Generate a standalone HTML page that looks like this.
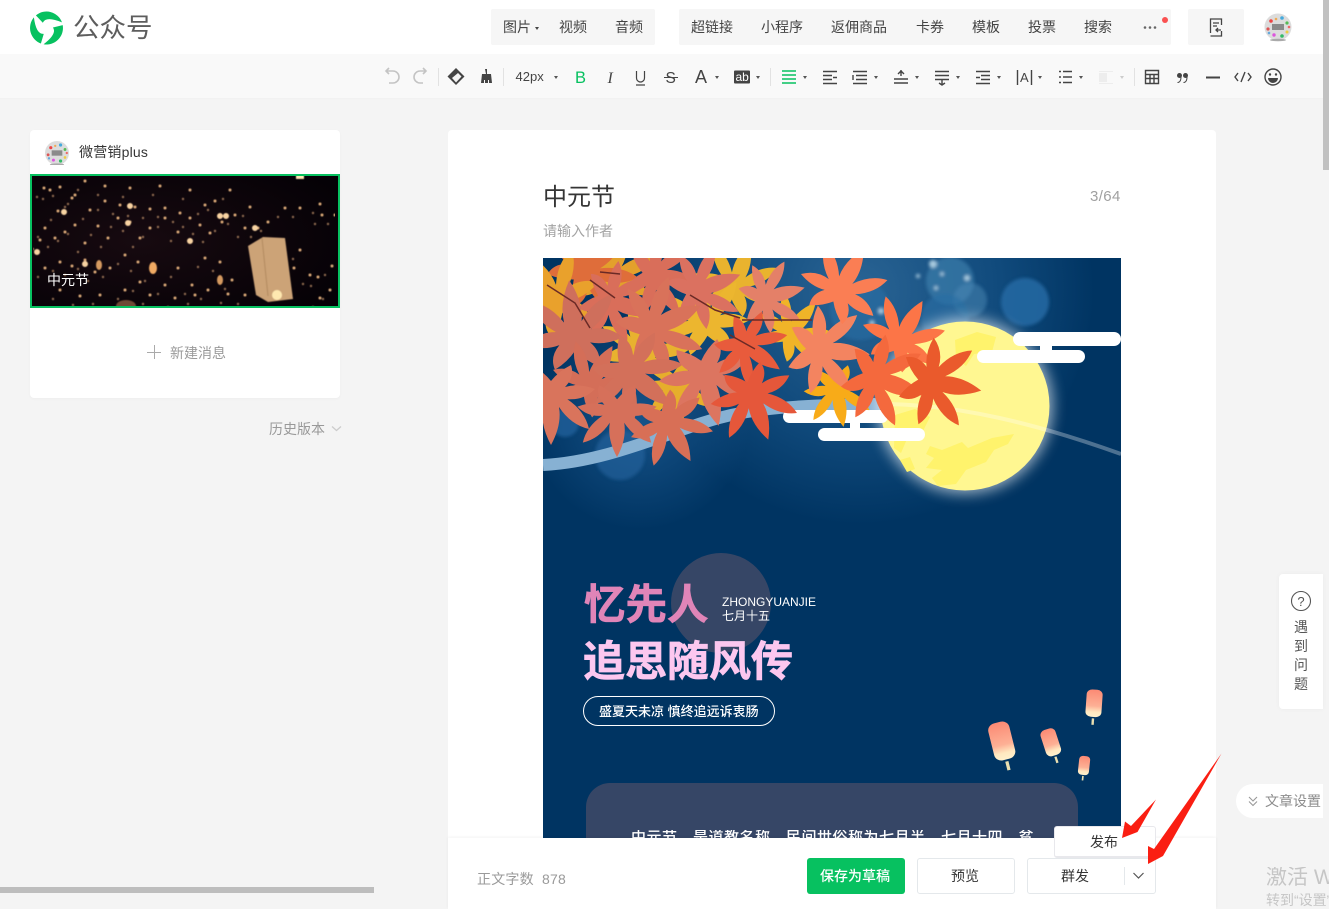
<!DOCTYPE html>
<html lang="zh"><head><meta charset="utf-8"><title>公众号</title>
<style>
html,body{margin:0;padding:0;width:1329px;height:909px;overflow:hidden;background:#f4f4f4;font-family:"Liberation Sans","Noto Sans CJK SC",sans-serif;color:#353535}
.a{position:absolute}
.t{position:absolute;white-space:nowrap;line-height:1;font-size:14px}
.n{color:#444}
</style></head><body>
<div class="a" style="left:0;top:0;width:1323px;height:54px;background:#fff"></div>
<div class="a" style="left:0;top:54px;width:1323px;height:45px;background:#f9f9f9;border-bottom:1px solid #f2f2f2;box-sizing:border-box"></div>
<div class="a" style="left:1323px;top:0;width:6px;height:170px;background:#c1c1c1"></div>

<svg class="a" style="left:28px;top:10px" width="38" height="36" viewBox="-18.500 -18 38 36">
<defs><path id="bl" d="M-10.600-12.600A16.500 16.500 0 0 1 15.500-5.600Q-.5-12.300-3.700-5.300Z" fill="#07c160"/></defs>
<use href="#bl"/><use href="#bl" transform="rotate(120)"/><use href="#bl" transform="rotate(240)"/></svg>
<div class="t" style="left:73px;top:15px;font-size:26.500px;color:#5d5d5d">公众号</div>

<div class="a" style="left:491px;top:9px;width:164px;height:36px;background:#f6f6f6;border-radius:2px"></div>
<div class="a" style="left:679px;top:9px;width:492px;height:36px;background:#f6f6f6;border-radius:2px"></div>
<div class="a" style="left:1188px;top:9px;width:56px;height:36px;background:#f6f6f6;border-radius:2px"></div>
<div class="t n" style="left:503px;top:20px">图片</div>
<div class="t n" style="left:559px;top:20px">视频</div>
<div class="t n" style="left:615px;top:20px">音频</div>
<div class="t n" style="left:691px;top:20px">超链接</div>
<div class="t n" style="left:761px;top:20px">小程序</div>
<div class="t n" style="left:831px;top:20px">返佣商品</div>
<div class="t n" style="left:916px;top:20px">卡券</div>
<div class="t n" style="left:972px;top:20px">模板</div>
<div class="t n" style="left:1028px;top:20px">投票</div>
<div class="t n" style="left:1084px;top:20px">搜索</div>

<svg class="a" style="left:0;top:0" width="1323" height="99" viewBox="0 0 1323 99">
<defs><g id="av"><circle r="13.500" fill="#dcdcdc"/><circle cx="-7" cy="-6" r="1.800" fill="#e44"/><circle cx="4" cy="-9" r="1.800" fill="#4ad"/><circle cx="9" cy="-4" r="1.600" fill="#5b5"/><circle cx="-10" cy="2" r="1.600" fill="#d55"/><circle cx="-4" cy="8" r="1.700" fill="#d5d"/><circle cx="4" cy="9" r="1.800" fill="#3b6"/><circle cx="9" cy="5" r="1.500" fill="#ec4"/><circle cx="-2" cy="-8" r="1.300" fill="#ea5"/><circle cx="11" cy="0" r="1.300" fill="#e66"/><circle cx="-9" cy="6" r="1.300" fill="#6ad"/><rect x="-6" y="-3" width="12" height="6" fill="#8a8a8a"/><ellipse cy="13" rx="8" ry="1.300" fill="#aaa"/></g></defs>
<path d="M535 27l4 0-2 3z" fill="#444"/>
<g fill="#666"><circle cx="1145" cy="27.500" r="1.300"/><circle cx="1150" cy="27.500" r="1.300"/><circle cx="1155" cy="27.500" r="1.300"/></g>
<circle cx="1165" cy="20" r="3" fill="#fa5151"/>
<path d="M1210.500 33V19h11v6M1210.500 36h11v-5M1213 23h6M1213 26h4M1221 30h-5m2-2l-2 2 2 2" fill="none" stroke="#444" stroke-width="1.300"/>
<use href="#av" x="1278" y="27"/>
<g fill="none" stroke="#c4c4c4" stroke-width="1.600"><path d="M387 71h6a5 5 0 0 1 0 12h-4M389 68l-3 3 3 3"/><path d="M426 71h-6a5 5 0 0 0 0 12h3M423 68l3 3-3 3"/></g>
<path d="M438.500 68v18M503.500 68v18M770.500 68v18M1134.500 68v18" stroke="#e2e2e2"/>
<path d="M456 68l8.500 8.500L456 85l-8.500-8.500z" fill="#444"/><path d="M452 78l6-5 3.500 3.500-5.500 6z" fill="#f4f4f4"/>
<path d="M485 69h2v5h4l1 9h-3v-3h-1v3h-3v-3h-1v3h-3l1-9h4z" fill="#444"/>
<text x="515.500" y="81" font-size="13" fill="#444">42px</text>
<g fill="#555"><path d="M554 76h4l-2 3zM715 76h4l-2 3zM756 76h4l-2 3zM803 76h4l-2 3zM874 76h4l-2 3zM915 76h4l-2 3zM956 76h4l-2 3zM997 76h4l-2 3zM1038 76h4l-2 3zM1079 76h4l-2 3z"/><path d="M1120 76h4l-2 3z" fill="#ccc"/></g>
<text x="575" y="83" font-size="16.500" fill="#07c160">B</text>
<text x="607.500" y="83" font-size="16" font-family="Liberation Serif" font-style="italic" fill="#444">I</text>
<path d="M636.500 71v7a4 4 0 0 0 8 0v-7M636 85h9" fill="none" stroke="#444" stroke-width="1.200"/>
<text x="665.500" y="83" font-size="15.500" fill="#444">S</text><path d="M664 77.500h14" stroke="#444"/>
<text x="695" y="83" font-size="18" fill="#444">A</text>
<rect x="734" y="70.500" width="16" height="13" rx="1" fill="#444"/><text x="735.500" y="81" font-size="12" fill="#fff">ab</text>
<g fill="none" stroke="#444" stroke-width="1.400">
<path d="M782 71h14M782 75h14M782 79h14M782 83h14" stroke="#07c160"/>
<path d="M823 71.500h14M823 75.500h9M823 79.500h9M823 83.500h14M833 77.500h4"/>
<path d="M853 71.500h14M853 83.500h14M856 75.500h11M856 79.500h11M853 75v5"/>
<path d="M894 79h14M894 83h14M901 70v6M898 74l3-3 3 3"/>
<path d="M935 71.500h14M935 75.500h14M935 79.500h14M942 80v5M939 83l3 2 3-2"/>
<path d="M976 71.500h14M981 75.500h9M981 79.500h9M976 83.500h14M976 77.500h4"/>
<path d="M1017.500 70v15M1031.500 70v15"/>
<path d="M1059 71.500h2M1063 71.500h9M1059 77h2M1063 77h9M1059 82.500h2M1063 82.500h9"/>
<path d="M1145.500 70.500h13v13h-13zM1145.500 74.500h13M1145.500 78.500h13M1150 74.500v9M1154 74.500v9"/>
<path d="M1238 73l-3 4 3 4M1248 73l3 4-3 4M1245 72l-4 10"/>
<circle cx="1273" cy="77" r="8"/>
</g>
<text x="1020" y="82" font-size="13" fill="#444">A</text>
<g fill="#ededed"><rect x="1099" y="71" width="14" height="1"/><rect x="1099" y="73" width="8" height="9"/><rect x="1099" y="83" width="14" height="1"/></g>
<g fill="#444"><circle cx="1179.500" cy="75.500" r="2.500"/><circle cx="1185.500" cy="75.500" r="2.500"/><path d="M1177.500 82c2 0 3-2 3-5l1 0c0 3-1 6-4 6zM1183.500 82c2 0 3-2 3-5l1 0c0 3-1 6-4 6z"/><rect x="1206" y="76.500" width="14" height="2"/><circle cx="1270" cy="74.500" r="1.200"/><circle cx="1276" cy="74.500" r="1.200"/><path d="M1268 78h10a5 5 0 0 1-10 0z"/></g>
</svg>

<!-- left card -->
<div class="a" style="left:30px;top:130px;width:310px;height:268px;background:#fff;border-radius:4px;box-shadow:0 1px 3px rgba(0,0,0,.03)"></div>
<svg class="a" style="left:45px;top:141px" width="24" height="24" viewBox="-13.500 -13.500 27 27"><use href="#av"/></svg>
<div class="t" style="left:79px;top:145px;letter-spacing:.2px;color:#353535">微营销plus</div>
<svg class="a" style="left:30px;top:174px" width="310" height="134" viewBox="30 174 310 134">
<defs><filter id="th" x="0" y="0" width="100%" height="100%"><feGaussianBlur stdDeviation=".45"/></filter>
<radialGradient id="ts" cx=".35" cy=".5" r=".75"><stop offset="0" stop-color="#170a10"/><stop offset="1" stop-color="#050106"/></radialGradient>
<path id="ds" stroke-linecap="round" fill="none" d="M44 188h0M50 190h0M60 187h0M75 195h0M85 181h0M105 186h0M130 188h0M160 186h0M190 190h0M230 190h0M300 208h0M320 204h0M45 228h0M58 211h0M72 198h0M90 210h0M105 201h0M120 205h0M135 207h0M150 209h0M165 208h0M180 213h0M205 205h0M215 201h0M250 207h0M40 240h0M55 238h0M65 232h0M75 225h0M85 243h0M98 226h0M108 238h0M118 218h0M130 222h0M140 238h0M150 228h0M165 218h0M178 232h0M190 218h0M200 225h0M210 233h0M222 222h0M235 215h0M245 228h0M258 228h0M268 222h0M285 208h0M45 268h0M60 262h0M72 266h0M85 260h0M95 272h0M110 268h0M125 255h0M138 262h0M152 272h0M165 285h0M178 268h0M192 285h0M205 258h0M220 262h0M232 280h0M245 295h0M60 290h0M80 296h0M100 295h0M125 290h0M140 282h0M150 295h0M175 298h0M195 295h0M208 290h0M228 294h0M300 250h0M318 277h0M332 266h0M335 215h0M322 215h0M310 275h0M320 298h0M294 268h0M330 290h0"/></defs>
<rect x="31" y="175" width="308" height="132" fill="url(#ts)"/>
<g filter="url(#th)">
<use href="#ds" stroke="#dcaa78" stroke-width="3"/>
<use href="#ds" stroke="#a97f5e" stroke-width="2.400" transform="translate(-7 9)" opacity=".85"/>
<g fill="none" stroke-linecap="round" stroke="#f8d3a2" stroke-width="6"><path d="M64 212h0M130 206h0M220 216h0M226 216h0M255 228h0M128 223h0M190 241h0M37 252h0M85 264h0"/></g>
<path d="M296 175h8v4h-8z" fill="#ffe9b5"/>
<ellipse cx="153" cy="268" rx="4" ry="6" fill="#f0aa64"/><ellipse cx="220" cy="280" rx="3" ry="5" fill="#d59a60"/><ellipse cx="99" cy="265" rx="3" ry="5" fill="#d59a60"/>
<path d="M248 246l15-9 22 1 8 61-25 3-12-7z" fill="#cca377"/><path d="M262 238l6 58" stroke="#b18a5e"/><circle cx="277" cy="295" r="5" fill="#ffe8b0"/>
<ellipse cx="126" cy="306" rx="10" ry="6" fill="#6e4a34"/>
</g>
<rect x="31" y="175" width="308" height="132" fill="none" stroke="#07c160" stroke-width="2"/>
</svg>
<div class="t" style="left:47px;top:273px;color:#fff">中元节</div>
<div class="a" style="left:147px;top:351.500px;width:14px;height:1.500px;background:#aaa"></div>
<div class="a" style="left:153.500px;top:345px;width:1.500px;height:14px;background:#aaa"></div>
<div class="t" style="left:170px;top:346px;color:#9a9a9a">新建消息</div>
<div class="t" style="left:269px;top:422px;color:#999">历史版本</div>
<svg class="a" style="left:331px;top:425px" width="11" height="8"><path d="M1 1.500l4.500 4 4.500-4" fill="none" stroke="#ccc" stroke-width="1.300"/></svg>

<!-- main card -->
<div class="a" style="left:448px;top:130px;width:768px;height:779px;background:#fff;border-radius:4px 4px 0 0"></div>
<div class="t" style="left:543px;top:186px;font-size:24px;color:#353535">中元节</div>
<div class="t" style="left:1090px;top:189px;font-size:15px;letter-spacing:.4px;color:#a0a0a0">3/64</div>
<div class="t" style="left:543px;top:224px;font-size:14px;color:#a3a3a3">请输入作者</div>

<svg class="a" style="left:543px;top:258px" width="578" height="580" viewBox="543 258 578 580">
<defs>
<radialGradient id="bg" gradientUnits="userSpaceOnUse" cx="860" cy="290" r="235"><stop offset="0" stop-color="#2a6494"/><stop offset=".6" stop-color="#104a7c"/><stop offset="1" stop-color="#003462"/></radialGradient>
<radialGradient id="bg2" gradientUnits="userSpaceOnUse" cx="640" cy="420" r="110"><stop offset="0" stop-color="#175389"/><stop offset="1" stop-color="#175389" stop-opacity="0"/></radialGradient>
<linearGradient id="lg" x1="0" y1="0" x2="0" y2="1"><stop offset="0" stop-color="#fc8a74"/><stop offset=".6" stop-color="#fdb095"/><stop offset=".82" stop-color="#ffe8c0"/><stop offset="1" stop-color="#fff0cc"/></linearGradient>
<filter id="gl" x="-30%" y="-30%" width="160%" height="160%"><feGaussianBlur stdDeviation="7"/></filter>
<filter id="bk" x="-30%" y="-30%" width="160%" height="160%"><feGaussianBlur stdDeviation="1.500"/></filter>
<path id="lf" d="M0-50Q11-30 8-12 20-30 38-34 34-16 16-4 32-6 44 6 28 12 14 8 24 18 20 30 8 24 0 14-8 24-20 30-24 18-14 8-28 12-44 6-32-6-16-4-34-16-38-34-20-30-8-12-11-30 0-50Z"/>
<g id="ln"><rect x="-10" y="-20" width="20" height="38" rx="7" fill="url(#lg)"/><rect x="-1.500" y="20" width="3" height="9" fill="#eadfb0"/></g>
</defs>
<rect x="543" y="258" width="578" height="580" fill="#003462"/>
<rect x="543" y="258" width="578" height="300" fill="url(#bg)"/>
<rect x="510" y="300" width="300" height="240" fill="url(#bg2)"/>
<g filter="url(#bk)">
<circle cx="1025" cy="302" r="24" fill="#266aa3" opacity=".85"/><circle cx="950" cy="281" r="24" fill="#3e7fae" opacity=".65"/><circle cx="970" cy="300" r="17" fill="#4a8ab5" opacity=".5"/><circle cx="945" cy="318" r="24" fill="#2a6fa5" opacity=".65"/><circle cx="860" cy="310" r="30" fill="#2a6fa5" opacity=".55"/><circle cx="565" cy="423" r="14" fill="#2464a0" opacity=".7"/><circle cx="620" cy="455" r="25" fill="#2465a0" opacity=".6"/>
<g fill="#a7c9de"><circle cx="933" cy="264" r="4"/><circle cx="918" cy="276" r="2"/><circle cx="942" cy="274" r="2"/><circle cx="936" cy="288" r="2"/><circle cx="967" cy="278" r="3"/><circle cx="872" cy="323" r="2.500"/><circle cx="881" cy="311" r="3"/></g></g>
<path d="M543 465C600 462 650 440 702 423 735 412 770 405 880 404" fill="none" stroke="#87b1d3" stroke-width="12"/>
<circle cx="965" cy="406" r="88" fill="#fff" filter="url(#gl)" opacity=".6"/>
<circle cx="965" cy="406" r="84.500" fill="#fff791"/>
<g fill="#fff36c"><path d="M955 340l22-8 19 5-4 15-18 2-8 12-10-8zM895 415l20-6 15 8-8 16-15 6-6 14-7-5z"/><path d="M930 446l12 4 20-8 6 6 24-10 22-4-6 10-14 6-8 12-20 8-10 14-18 2-6-8 10-8-16-2 8-10-8-4z"/><path d="M900 460l10-3 5 12-8 3z"/></g>
<path d="M880 404C960 404 1040 425 1121 454" fill="none" stroke="#fff" stroke-opacity=".3" stroke-width="4"/>
<g fill="#fff"><rect x="1013" y="332" width="108" height="14" rx="7"/><rect x="977" y="350" width="108" height="13" rx="6.500"/><rect x="1040" y="344" width="12" height="8"/><rect x="783" y="410" width="105" height="13" rx="6.500"/><rect x="818" y="428" width="107" height="13" rx="6.500"/><rect x="850" y="420" width="10" height="10"/></g>
<g>
<use href="#lf" transform="translate(735 285) rotate(20) scale(.9)" fill="#e9b32e"/>
<use href="#lf" transform="translate(705 322) rotate(-10) scale(1)" fill="#ecb62f"/>
<use href="#lf" transform="translate(640 350) rotate(40) scale(1)" fill="#e8b22f"/>
<use href="#lf" transform="translate(675 385) rotate(170) scale(.8)" fill="#e6ae2c"/>
<use href="#lf" transform="translate(790 333) rotate(40) scale(.8)" fill="#f0b428"/>
<use href="#lf" transform="translate(610 275) rotate(20) scale(1)" fill="#e3a02c"/>
<use href="#lf" transform="translate(585 270) rotate(50) scale(1.050)" fill="#df6d3a"/>
<use href="#lf" transform="translate(555 300) rotate(-30) scale(1.050)" fill="#e9a12c"/>
<use href="#lf" transform="translate(655 275) rotate(100) scale(.9)" fill="#d96e5a"/>
<use href="#lf" transform="translate(610 300) rotate(110) scale(.9)" fill="#d96e5a"/>
<use href="#lf" transform="translate(698 290) rotate(70) scale(.9)" fill="#db7160"/>
<use href="#lf" transform="translate(766 298) rotate(75) scale(.8)" fill="#e48068"/>
<use href="#lf" transform="translate(653 328) rotate(65) scale(1.050)" fill="#d9725a"/>
<use href="#lf" transform="translate(574 335) rotate(-5) scale(1.100)" fill="#cf6f5c"/>
<use href="#lf" transform="translate(590 385) rotate(30) scale(.9)" fill="#d46e58"/>
<use href="#lf" transform="translate(551 395) rotate(180) scale(1)" fill="#d9745c"/>
<use href="#lf" transform="translate(630 372) rotate(130) scale(1.050)" fill="#d3705a"/>
<use href="#lf" transform="translate(705 375) rotate(165) scale(1.050)" fill="#dc7560"/>
<use href="#lf" transform="translate(617 412) rotate(180) scale(.9)" fill="#d6705a"/>
<use href="#lf" transform="translate(668 422) rotate(150) scale(.9)" fill="#d86f56"/>
<use href="#lf" transform="translate(745 345) rotate(125) scale(.85)" fill="#e85b3c"/>
<use href="#lf" transform="translate(752 395) rotate(160) scale(.95)" fill="#e5573a"/>
<use href="#lf" transform="translate(837 390) rotate(170) scale(.75)" fill="#f8ab18"/>
<use href="#lf" transform="translate(820 350) rotate(95) scale(1)" fill="#f38460"/>
<use href="#lf" transform="translate(840 290) rotate(30) scale(.95)" fill="#fa7e54"/>
<use href="#lf" transform="translate(900 340) rotate(30) scale(.9)" fill="#fc7547"/>
<use href="#lf" transform="translate(876 378) rotate(110) scale(1)" fill="#f4693d"/>
<use href="#lf" transform="translate(932 382) rotate(100) scale(1)" fill="#ea5a2c"/>
</g>
<g fill="none" stroke="#6a2a26" stroke-width="1.500"><path d="M547 285l28 18 15 25M590 280l25 18M690 295l25 15 25 8M730 335l25 14M600 272l20 2M742 320h70"/></g>
<ellipse cx="721" cy="603" rx="50" ry="50" fill="#364666"/>
<rect x="586" y="783" width="492" height="80" rx="24" fill="#364666"/>
<rect x="583.500" y="696.500" width="191" height="29" rx="14.500" fill="none" stroke="#fff"/>
<use href="#ln" transform="translate(1002 742) rotate(-14) scale(1.080 1)"/>
<use href="#ln" transform="translate(1051 743) rotate(-18) scale(.78 .72)"/>
<use href="#ln" transform="translate(1084 766) rotate(6) scale(.55 .5)"/>
<use href="#ln" transform="translate(1094 704) rotate(4) scale(.8 .72)"/>
</svg>
<div class="t" style="left:584px;top:584px;font-size:41.500px;font-weight:700;color:#e085b8;-webkit-text-stroke:.7px #e085b8">忆先人</div>
<div class="t" style="left:583px;top:641px;font-size:42px;font-weight:700;color:#fcc7ef;-webkit-text-stroke:.7px #fcc7ef">追思随风传</div>
<div class="t" style="left:722px;top:596px;font-size:12px;color:#fff">ZHONGYUANJIE</div>
<div class="t" style="left:722px;top:610px;font-size:12px;color:#fff">七月十五</div>
<div class="t" style="left:599px;top:705px;font-size:13px;font-weight:500;color:#fff">盛夏天未凉 慎终追远诉衷肠</div>
<div class="t" style="left:631px;top:830px;font-size:15px;font-weight:500;letter-spacing:.5px;color:#fff;width:410px;height:8px;overflow:hidden">中元节，是道教名称，民间世俗称为七月半，七月十四，贫</div>

<!-- bottom bar -->
<div class="a" style="left:448px;top:838px;width:768px;height:71px;background:#fff;box-shadow:0 -1px 3px rgba(0,0,0,.05)"></div>
<div class="t" style="left:477px;top:872px;letter-spacing:.2px;color:#9a9a9a">正文字数&nbsp;&nbsp;878</div>
<div class="a" style="left:807px;top:858px;width:98px;height:36px;background:#07c160;border-radius:3px"></div>
<div class="t" style="left:820px;top:869px;font-size:14px;font-weight:500;color:#fff">保存为草稿</div>
<div class="a" style="left:917px;top:858px;width:98px;height:36px;border:1px solid #e4e8eb;border-radius:3px;box-sizing:border-box;background:#fff"></div>
<div class="t" style="left:951px;top:869px;font-size:14px;color:#353535">预览</div>
<div class="a" style="left:1027px;top:858px;width:129px;height:36px;border:1px solid #e4e8eb;border-radius:3px;box-sizing:border-box;background:#fff"></div>
<div class="t" style="left:1061px;top:869px;font-size:14px;color:#353535">群发</div>
<div class="a" style="left:1124px;top:867px;width:1px;height:18px;background:#e4e8eb"></div>
<svg class="a" style="left:1132px;top:871px" width="14" height="10"><path d="M1.500 2l5 5 5-5" fill="none" stroke="#555" stroke-width="1.200"/></svg>
<div class="a" style="left:1054px;top:826px;width:102px;height:32px;background:#fff;border:1px solid #e8e8ec;border-bottom-width:2px;border-radius:3px;box-sizing:border-box"></div>
<div class="t" style="left:1090px;top:835px;color:#353535">发布</div>

<!-- side panels -->
<div class="a" style="left:1279px;top:574px;width:44px;height:135px;background:#fff;border-radius:4px 0 0 4px;box-shadow:0 0 6px rgba(0,0,0,.04)"></div>
<svg class="a" style="left:1290px;top:590px" width="22" height="22"><circle cx="11" cy="11" r="9.500" fill="none" stroke="#555" stroke-width="1.100"/><text x="11" y="16" font-size="13" text-anchor="middle" fill="#555">?</text></svg>
<div class="t" style="left:1294px;top:620px;color:#555">遇</div>
<div class="t" style="left:1294px;top:639px;color:#555">到</div>
<div class="t" style="left:1294px;top:658px;color:#555">问</div>
<div class="t" style="left:1294px;top:677px;color:#555">题</div>
<div class="a" style="left:1236px;top:784px;width:87px;height:34px;background:#fff;border-radius:17px 0 0 17px"></div>
<svg class="a" style="left:1248px;top:796px" width="11" height="11"><path d="M1 1l4 4 4-4M1 5.500l4 4 4-4" fill="none" stroke="#999" stroke-width="1.100"/></svg>
<div class="t" style="left:1265px;top:794px;color:#8c8c8c;width:58px;overflow:hidden">文章设置</div>
<div class="t" style="left:1266px;top:867px;width:63px;overflow:hidden;font-size:21px;color:#c6c6c6">激活 W</div>
<div class="t" style="left:1266px;top:893px;width:63px;height:16px;overflow:hidden;color:#c6c6c6">转到“设置”</div>
<div class="a" style="left:0;top:887px;width:374px;height:6px;background:#bdbdbd"></div>

<svg class="a" style="left:0;top:0;pointer-events:none" width="1329" height="909" viewBox="0 0 1329 909">
<path d="M1156 799.500L1137.500 832 1122 838 1125 821.500 1131 826zM1221.500 753.500L1163 856 1148 864 1148 846 1154 849z" fill="#fa1e12"/>
</svg>
</body></html>
